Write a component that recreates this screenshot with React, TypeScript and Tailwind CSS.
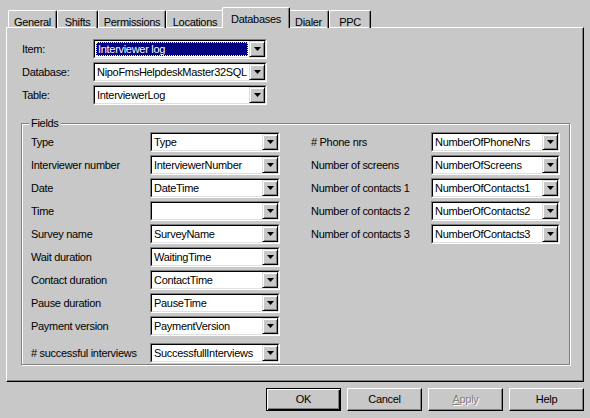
import React from 'react';

const face = 'bg-[#c8c8c8]';

function Tab({ label, w, active }: { label: string; w: string; active?: boolean }) {
  if (active) {
    return (
      <div
        className={`relative z-10 -mx-[2px] h-[21px] ${w} ${face} border-l border-t border-white rounded-t-[2px] border-r border-r-black shadow-[inset_-1px_0_0_#808080] flex items-start justify-center pt-[3px]`}
      >
        {label}
      </div>
    );
  }
  return (
    <div
      className={`h-[18px] ${w} border-l border-t border-white rounded-t-[2px] border-r border-r-black shadow-[inset_-1px_0_0_#808080] flex items-start justify-center pt-[3px]`}
    >
      {label}
    </div>
  );
}

function Arrow() {
  return (
    <div className="w-[16px] h-full flex-shrink-0 bg-[#c8c8c8] border border-t-[#dfdfdf] border-l-[#dfdfdf] border-r-black border-b-black shadow-[inset_1px_1px_0_#fff,inset_-1px_-1px_0_#808080] flex items-center justify-center">
      <svg width="7" height="4" viewBox="0 0 7 4">
        <polygon points="0,0 7,0 3.5,4" fill="#000" />
      </svg>
    </div>
  );
}

function Combo({ value, w, selected }: { value: string; w: string; selected?: boolean }) {
  return (
    <div className={`h-[20px] ${w} flex border border-t-[#808080] border-l-[#808080] border-r-white border-b-white`}>
      <div className="flex flex-1 min-w-0 bg-white border border-t-black border-l-black border-r-[#dfdfdf] border-b-[#dfdfdf]">
        <div className="flex-1 min-w-0 overflow-hidden whitespace-nowrap">
          {selected ? (
            <div className="m-[1px] h-[14px] bg-[#000080] text-white border border-dotted border-[#ffff80] leading-[12px] pl-[1px]">
              {value}
            </div>
          ) : (
            <div className="pl-[2px] leading-[16px]">{value}</div>
          )}
        </div>
        <Arrow />
      </div>
    </div>
  );
}

function Row({ label, value, extra }: { label: string; value: string; extra?: string }) {
  return (
    <div className={`flex items-center h-[20px] ${extra ?? ''}`}>
      <div className="w-[119px] whitespace-nowrap">{label}</div>
      <Combo value={value} w="w-[130px]" />
    </div>
  );
}

function Btn({ children, def }: { children: React.ReactNode; def?: boolean }) {
  if (def) {
    return (
      <div className="w-[75px] h-[23px] border border-black shadow-[inset_1px_1px_0_#fff,inset_-1px_-1px_0_#000,inset_-2px_-2px_0_#808080] flex items-center justify-center">
        {children}
      </div>
    );
  }
  return (
    <div className="w-[75px] h-[23px] border border-t-white border-l-white border-r-black border-b-black shadow-[inset_-1px_-1px_0_#808080] flex items-center justify-center">
      {children}
    </div>
  );
}

const left: [string, string][] = [
  ['Type', 'Type'],
  ['Interviewer number', 'InterviewerNumber'],
  ['Date', 'DateTime'],
  ['Time', ''],
  ['Survey name', 'SurveyName'],
  ['Wait duration', 'WaitingTime'],
  ['Contact duration', 'ContactTime'],
  ['Pause duration', 'PauseTime'],
  ['Payment version', 'PaymentVersion'],
];

const right: [string, string][] = [
  ['# Phone nrs', 'NumberOfPhoneNrs'],
  ['Number of screens', 'NumberOfScreens'],
  ['Number of contacts 1', 'NumberOfContacts1'],
  ['Number of contacts 2', 'NumberOfContacts2'],
  ['Number of contacts 3', 'NumberOfContacts3'],
];

export default function App() {
  return (
    <div
      className={`w-[590px] h-[418px] ${face} text-black text-[11px] tracking-[-0.3px] overflow-hidden`}
      style={{ fontFamily: '"Liberation Sans", Arial, sans-serif' }}
    >
      {/* tabs */}
      <div className="flex items-end pl-[8px] pt-[7px] h-[28px]">
        <Tab label="General" w="w-[49px]" />
        <Tab label="Shifts" w="w-[41px]" />
        <Tab label="Permissions" w="w-[68px]" />
        <Tab label="Locations" w="w-[58px]" />
        <Tab label="Databases" w="w-[68px]" active />
        <Tab label="Dialer" w="w-[41px]" />
        <Tab label="PPC" w="w-[42px]" />
      </div>

      {/* page */}
      <div className="-mt-[1px] ml-[6px] w-[578px] h-[355px] border-l border-t border-white border-r border-b border-r-black border-b-black shadow-[inset_-1px_-1px_0_#808080] pl-[14px] pt-[11px]">
        <div className="pl-[1px] flex flex-col gap-[3px]">
          <div className="flex items-center h-[20px]">
            <div className="w-[71px]">Item:</div>
            <Combo value="Interviewer log" w="w-[174px]" selected />
          </div>
          <div className="flex items-center h-[20px]">
            <div className="w-[71px]">Database:</div>
            <Combo value="NipoFmsHelpdeskMaster32SQL" w="w-[174px]" />
          </div>
          <div className="flex items-center h-[20px]">
            <div className="w-[71px]">Table:</div>
            <Combo value="InterviewerLog" w="w-[174px]" />
          </div>
        </div>

        {/* Fields group */}
        <div className="relative mt-[18px] w-[549px] h-[242px] border border-[#808080] shadow-[inset_1px_1px_0_#fff,1px_1px_0_#fff] pl-[9px] pt-[8px] flex gap-[31px]">
          <div className={`absolute -top-[8px] left-[7px] px-[2px] ${face} leading-[14px]`}>Fields</div>
          <div className="flex flex-col gap-[3px]">
            {left.map(([l, v]) => (
              <Row key={l} label={l} value={v} />
            ))}
            <Row label="# successful interviews" value="SuccessfullInterviews" extra="mt-[4px]" />
          </div>
          <div className="flex flex-col gap-[3px]">
            {right.map(([l, v]) => (
              <div key={l} className="flex items-center h-[20px]">
                <div className="w-[120px] whitespace-nowrap">{l}</div>
                <Combo value={v} w="w-[129px]" />
              </div>
            ))}
          </div>
        </div>
      </div>

      {/* buttons */}
      <div className="flex justify-end gap-[6px] pr-[6px] pt-[6px]">
        <Btn def>OK</Btn>
        <Btn>Cancel</Btn>
        <Btn>
          <span className="text-[#808080] [text-shadow:1px_1px_0_#fff]">
            <span className="underline">A</span>pply
          </span>
        </Btn>
        <Btn>Help</Btn>
      </div>
    </div>
  );
}
